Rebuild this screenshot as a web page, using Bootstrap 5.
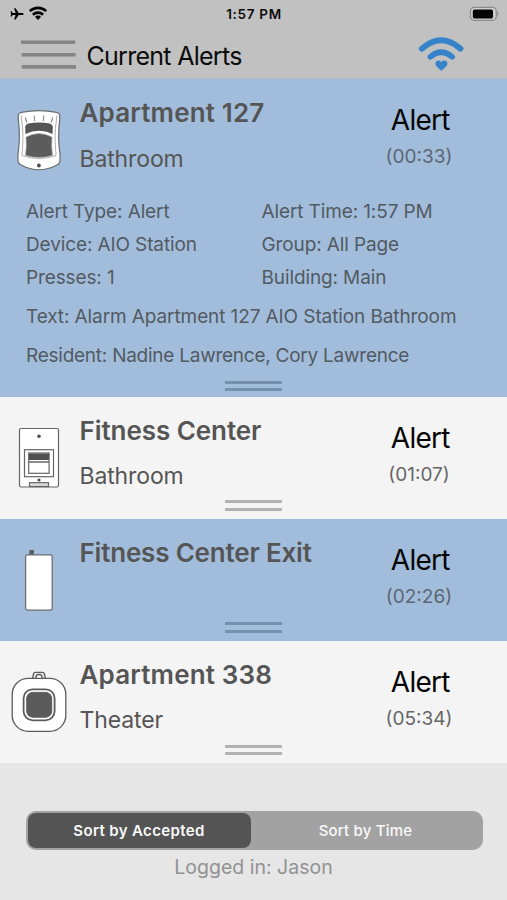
<!DOCTYPE html>
<html lang="en">
<head>
<meta charset="utf-8">
<meta name="viewport" content="width=device-width, initial-scale=1">
<title>Current Alerts</title>
<link href="https://cdn.jsdelivr.net/npm/bootstrap@5.3.0/dist/css/bootstrap.min.css" rel="stylesheet">
<style>
body{font-family:Inter,"Liberation Sans",sans-serif;background:#e6e6e6;color:#555;width:507px;height:900px;overflow:hidden}
.topbar{height:79px;background:#c1c1c1;border-bottom:1px solid #b4b8be;color:#0b0b0b}
.statusbar{height:27px;padding:0 8px 0 9px;grid-template-columns:1fr auto 1fr}
.clock{font-size:13.5px;font-weight:600;line-height:27px;letter-spacing:.7px;padding-top:1px}
.titlebar{height:51px;padding:0 43px 0 21px}
.burger{width:55px;height:32px;margin-top:4px}
.page-title{font-size:25px;line-height:32px;font-weight:400;margin:6px 0 0 10.5px;letter-spacing:-.72px}
.heartwifi{width:46px;height:36px;margin-top:2px}
.alert-row{height:122.2px;background:#f4f4f4;padding-bottom:8px}
.alert-row.accepted{background:#a2bddb}
.alert-row.expanded{height:317.5px;padding-bottom:5.5px}
.device-icon{width:79.5px;flex:none;height:115px}
.row-head{height:100px}
.expanded .row-head{height:115.5px}
.place{font-size:26px;line-height:30px;font-weight:600;margin:19px 0 15px;letter-spacing:-.06px;white-space:nowrap}
.place.roomy{letter-spacing:.16px}
.place.snug{letter-spacing:-.19px}
.room{font-size:23px;line-height:30px;letter-spacing:-.13px;padding-top:.5px}
.status-col{width:176px}
.kind{font-size:28px;line-height:34px;color:#050505;margin:24px 0 7px;letter-spacing:-.75px;padding-left:2.5px}
.elapsed{font-size:19px;line-height:24px;color:#666;padding-top:1px}
.alert-row.accepted .elapsed{color:#5a6673}
.details{font-size:19px;line-height:33.3px;padding-left:26px;color:#525a62;letter-spacing:-.12px}
.details .cell-a{width:235.5px}
.wide-line{line-height:39px}
.text-line{margin-top:3px;letter-spacing:-.1px}
.people{letter-spacing:-.25px}
.grip{width:57.5px;height:10.5px;border-top:3px solid #b2b2b2;border-bottom:3px solid #b2b2b2;margin-left:224.5px;flex:none}
.accepted .grip{border-color:#7690ad}
.sorter{width:457px;height:39px;margin:48px 0 0 25.5px;background:#a2a2a2;border-radius:10px;padding:2px}
.sorter .btn{font-size:15px;font-weight:500;line-height:20px;color:#fafafa;border:0;border-radius:8px;padding:0;letter-spacing:.2px}
.sorter .btn.active{background:#545454;color:#fafafa;width:223px;font-weight:600;letter-spacing:.36px}
.user-line{font-size:19.5px;line-height:30px;color:#929292;margin-top:2px}
</style>
<script src="https://cdn.jsdelivr.net/npm/bootstrap@5.3.0/dist/js/bootstrap.bundle.min.js"></script>
</head>
<body>
<header class="topbar">
  <div class="statusbar d-grid align-items-center">
    <div class="d-flex align-items-center">
      <svg width="40" height="18" viewBox="9 5 40 18" fill="#050505">
        <path d="M23.600 13.900c0 .7-.6 1-1.500 1h-3.400l-3.100 4.600h-1.500l1.500-4.600h-2.800l-1.200 1.600h-1.100l.6-2.600-.6-2.600h1.100l1.200 1.600h2.800l-1.500-4.600h1.500l3.100 4.600h3.400c.9 0 1.500.3 1.500 1z"/>
        <g fill="none" stroke="#050505" stroke-width="2.600"><path d="M29.800 11.100a12 12 0 0 1 16.400 0"/><path d="M32.900 14.700a7.400 7.400 0 0 1 10.200 0"/></g>
        <path d="M38 20l-3-3.200a4.200 4.200 0 0 1 6 0z"/>
      </svg>
    </div>
    <div class="clock">1:57 PM</div>
    <div class="d-flex justify-content-end">
      <svg width="30" height="16" viewBox="0 0 30 16"><rect x="1.500" y="1.300" width="25.700" height="13" rx="3.800" fill="#cfcfcf" stroke="#8b8b8b" stroke-width="1.200"/><rect x="3.800" y="3.400" width="20.200" height="9" rx="1.700" fill="#050505"/><path d="M28.300 5.400c1.500.5 1.500 4.200 0 4.700z" fill="#8b8b8b"/></svg>
    </div>
  </div>
  <div class="titlebar d-flex align-items-center">
    <svg class="burger" viewBox="0 0 55 32" stroke="#858585" stroke-width="3.600"><path d="M0 3.300h54.300M.6 15.700h54M.6 27.900h54.400"/></svg>
    <h1 class="page-title">Current Alerts</h1>
    <svg class="heartwifi ms-auto" viewBox="0 0 46 36" fill="none" stroke="#3783c9" stroke-linecap="round"><path d="M3.800 12.700Q23.200-4 42.500 12.700" stroke-width="5.800"/><path d="M12.300 20.800Q23.300 11.700 34.200 20.800" stroke-width="5.600"/><path d="M23.400 35c-1.200-1.800-6-4.200-6-7.200 0-3.500 4.200-4.300 6-1.500 1.800-2.800 6-2 6 1.500 0 3-4.800 5.400-6 7.200z" fill="#3783c9" stroke="none"/></svg>
  </div>
</header>

<main>
  <section class="alert-row accepted expanded d-flex flex-column">
    <div class="row-head d-flex">
      <svg class="device-icon" viewBox="0 79 79.500 115">
        <path d="M18.300 115q.3-2 3-2.700 17.700-3.400 35.400 0 2.700.7 3 2.700.4 5-.7 11-.8 13 .3 22 1.200 7 .7 13-.2 2.500-3 4-18 9.500-36 0-2.800-1.500-3-4-.5-6 .7-13 1.100-9 .3-22-1.100-6-.7-11z" fill="#fff" stroke="#696b6f" stroke-width="1.200"/>
        <path d="M21.300 115.500q0 5 1.200 11 .9 12 0 23-.9 4-.3 6 17 6.500 33.600 0 .6-2-.3-6-.9-11 0-23 1.200-6 1.200-11" fill="none" stroke="#b5b5b5" stroke-width="1.100"/>
        <path d="M25.300 117.500l1.500 5M34.200 115.500l.5 5.500M43.800 115.500l-.5 5.500M52.700 117.500l-1.500 5" stroke="#858585" stroke-width="1.100"/>
        <path d="M25.200 126.500q.5-2.200 3-3 10.800-2 21.600 0 2.500.8 3 3l-.2 7.500q-13.600-6.500-27.200 0z" fill="#565656"/>
        <path d="M26 137q13-7 26 0-.9 9 .5 18.500-13.500 4-27 0 1.400-9.500.5-18.500z" fill="#5c5c5c" stroke="#a9a9a9" stroke-width=".7"/>
        <circle cx="38.900" cy="165.500" r="1.900" fill="#4d4d4d"/>
      </svg>
      <div class="flex-grow-1"><h2 class="place roomy">Apartment 127</h2><div class="room">Bathroom</div></div>
      <div class="status-col text-center"><div class="kind">Alert</div><div class="elapsed">(00:33)</div></div>
    </div>
    <div class="details">
      <div class="d-flex"><div class="cell-a">Alert Type: Alert</div><div>Alert Time: 1:57 PM</div></div>
      <div class="d-flex"><div class="cell-a">Device: AIO Station</div><div>Group: All Page</div></div>
      <div class="d-flex"><div class="cell-a">Presses: 1</div><div>Building: Main</div></div>
      <div class="wide-line text-line">Text: Alarm Apartment 127 AIO Station Bathroom</div>
      <div class="wide-line people">Resident: Nadine Lawrence, Cory Lawrence</div>
    </div>
    <div class="grip mt-auto"></div>
  </section>

  <section class="alert-row d-flex flex-column">
    <div class="row-head d-flex">
      <svg class="device-icon" viewBox="0 397 79.500 115" fill="#fff" stroke="#666" stroke-width="1.200">
        <rect x="19.500" y="428.500" width="39" height="58.500" rx="1.500"/>
        <rect x="24.500" y="449.700" width="29" height="27"/>
        <rect x="28.700" y="453" width="20.400" height="20.300"/>
        <path d="M29 453.500h20v6.500H29z" fill="#505050" stroke="none"/><path d="M29 462h20" stroke-width="1.500"/>
        <rect x="29.500" y="482.700" width="19" height="3.800" fill="#ddd"/>
        <g fill="#505050" stroke="none"><circle cx="39" cy="436.200" r="1.800"/><circle cx="39" cy="480" r="1.600"/></g>
      </svg>
      <div class="flex-grow-1"><h2 class="place">Fitness Center</h2><div class="room">Bathroom</div></div>
      <div class="status-col text-center"><div class="kind">Alert</div><div class="elapsed">(01:07)</div></div>
    </div>
    <div class="grip mt-auto"></div>
  </section>

  <section class="alert-row accepted d-flex flex-column">
    <div class="row-head d-flex">
      <svg class="device-icon" viewBox="0 519 79.500 115"><rect x="29.300" y="550" width="4.600" height="5" rx=".8" fill="#555c64"/><rect x="25.600" y="554.900" width="26.600" height="55.200" rx="1.800" fill="#fff" stroke="#6b6d70" stroke-width="1.300"/></svg>
      <div class="flex-grow-1"><h2 class="place snug">Fitness Center Exit</h2></div>
      <div class="status-col text-center"><div class="kind">Alert</div><div class="elapsed">(02:26)</div></div>
    </div>
    <div class="grip mt-auto"></div>
  </section>

  <section class="alert-row d-flex flex-column">
    <div class="row-head d-flex">
      <svg class="device-icon" viewBox="0 641 79.500 115" fill="#fff" stroke="#5c5c5c" stroke-width="1.300">
        <path d="M32.500 679l1-5q.4-1.600 2-1.600h7q1.600 0 2 1.600l1 5z" fill="#e6e6e6"/><path d="M36 679v-1.500a3 3 0 0 1 6 0v1.500"/>
        <rect x="12.200" y="678.300" width="53.600" height="53" rx="16"/>
        <rect x="23.600" y="689.300" width="31" height="31" rx="9" stroke-width="1.800"/>
        <rect x="26.700" y="692.400" width="25" height="24.800" rx="6" fill="#5a5a5a" stroke-width="1"/>
      </svg>
      <div class="flex-grow-1"><h2 class="place roomy">Apartment 338</h2><div class="room">Theater</div></div>
      <div class="status-col text-center"><div class="kind">Alert</div><div class="elapsed">(05:34)</div></div>
    </div>
    <div class="grip mt-auto"></div>
  </section>
</main>

<footer>
  <div class="sorter d-flex">
    <button type="button" class="btn active">Sort by Accepted</button>
    <button type="button" class="btn flex-grow-1">Sort by Time</button>
  </div>
  <div class="user-line text-center">Logged in: Jason</div>
</footer>
</body>
</html>
